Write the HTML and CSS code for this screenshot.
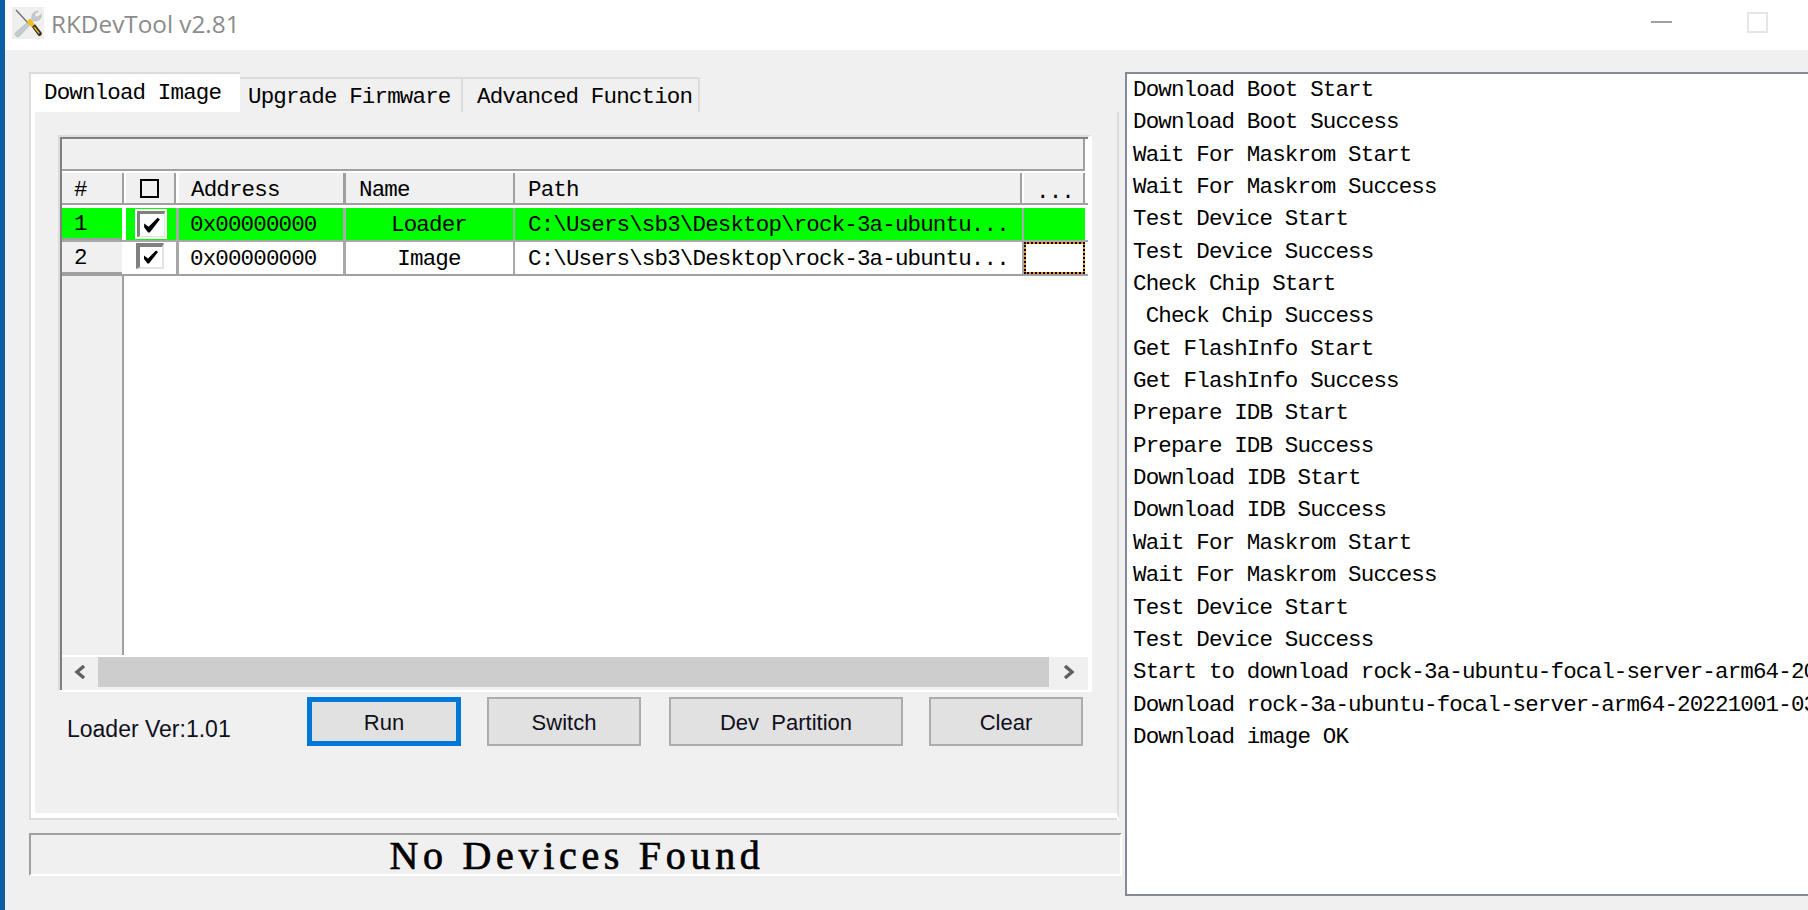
FILE: index.html
```html
<!DOCTYPE html>
<html lang="en">
<head>
<meta charset="utf-8">
<title>RKDevTool v2.81</title>
<link rel="stylesheet" href="styles.css">
</head>
<body>
<div class="window">
  <header class="titlebar">
    <svg class="app-icon" viewBox="0 0 32 32" aria-hidden="true">
      <rect width="32" height="32" fill="#efefef"/>
      <path d="M25 4.5a5.5 5.5 0 0 0-5 7.2L3.8 25.5a2.6 2.6 0 0 0 3.7 3.6l14.6-15.6a5.5 5.5 0 0 0 7.2-6.3l-3.6 3-3-1 .1-3.2 3.4-1.5a5.5 5.5 0 0 0-1.2 0z" fill="#c4ccd0" stroke="#a4acb0" stroke-width=".6"/>
      <path d="M4 3l12 13" stroke="#6d7478" stroke-width="1.4" fill="none"/>
      <path d="M14.5 14.5l3.5-3 5 6-3.2 3z" fill="#f2c01e"/>
      <path d="M20 20l3-2.8 6.5 8.3a2.3 2.3 0 0 1-3.3 3z" fill="#2c2a20"/>
      <path d="M21.5 20.5l1.2-1 5.2 6.6-1.2 1z" fill="#e6b318"/>
    </svg>
    <span class="app-title">RKDevTool v2.81</span>
    <span class="win-min"></span>
    <span class="win-max"></span>
  </header>
  <main class="body">
    <section class="left">
      <nav class="tabs">
        <div class="tab tab-active">Download Image</div>
        <div class="tab tab-second">Upgrade Firmware</div>
        <div class="tab tab-third">Advanced Function</div>
      </nav>
      <div class="panel">
        <div class="grid-outer">
          <div class="grid-inner">
            <div class="fixed-row"></div>
            <div class="row row-head">
              <div class="cell c-num">#</div>
              <div class="cell c-check"><span class="head-box"></span></div>
              <div class="cell c-addr">Address</div>
              <div class="cell c-name-head">Name</div>
              <div class="cell c-path">Path</div>
              <div class="cell c-more"><span class="more-dots">...</span></div>
            </div>
            <div class="row row-data row-green">
              <div class="cell c-num">1</div>
              <div class="cell c-check">
                <span class="check check-focus"><svg viewBox="0 0 16 14" aria-hidden="true"><path d="M1 6l4 3 8-8 2 1.500-9 11.500h-1.500L1 9.500z" fill="#000"/></svg></span>
              </div>
              <div class="cell c-addr">0x00000000</div>
              <div class="cell c-name">Loader</div>
              <div class="cell c-path">C:\Users\sb3\Desktop\rock-3a-ubuntu...</div>
              <div class="cell c-more"></div>
            </div>
            <div class="row row-data row-white">
              <div class="cell c-num">2</div>
              <div class="cell c-check">
                <span class="check"><svg viewBox="0 0 16 14" aria-hidden="true"><path d="M1 6l4 3 8-8 2 1.500-9 11.500h-1.500L1 9.500z" fill="#000"/></svg></span>
              </div>
              <div class="cell c-addr">0x00000000</div>
              <div class="cell c-name">Image</div>
              <div class="cell c-path">C:\Users\sb3\Desktop\rock-3a-ubuntu...</div>
              <div class="cell c-more c-focus"></div>
            </div>
            <div class="grid-empty"><div class="empty-num"></div></div>
            <div class="scrollbar">
              <div class="sb-arrow sb-left"><svg viewBox="0 0 14 14" aria-hidden="true"><path d="M11 1L4 7l7 6" fill="none" stroke="#606060" stroke-width="3.4"/></svg></div>
              <div class="sb-track"></div>
              <div class="sb-arrow sb-right"><svg viewBox="0 0 14 14" aria-hidden="true"><path d="M3 1l7 6-7 6" fill="none" stroke="#606060" stroke-width="3.4"/></svg></div>
            </div>
          </div>
        </div>
        <div class="actions">
          <span class="loader-ver">Loader Ver:1.01</span>
          <button class="btn btn-run">Run</button>
          <button class="btn btn-switch">Switch</button>
          <button class="btn btn-dev">Dev&nbsp; Partition</button>
          <button class="btn btn-clear">Clear</button>
        </div>
      </div>
      <div class="status">No Devices Found</div>
    </section>
    <section class="log">
      <div class="log-line">Download Boot Start</div>
      <div class="log-line">Download Boot Success</div>
      <div class="log-line">Wait For Maskrom Start</div>
      <div class="log-line">Wait For Maskrom Success</div>
      <div class="log-line">Test Device Start</div>
      <div class="log-line">Test Device Success</div>
      <div class="log-line">Check Chip Start</div>
      <div class="log-line"> Check Chip Success</div>
      <div class="log-line">Get FlashInfo Start</div>
      <div class="log-line">Get FlashInfo Success</div>
      <div class="log-line">Prepare IDB Start</div>
      <div class="log-line">Prepare IDB Success</div>
      <div class="log-line">Download IDB Start</div>
      <div class="log-line">Download IDB Success</div>
      <div class="log-line">Wait For Maskrom Start</div>
      <div class="log-line">Wait For Maskrom Success</div>
      <div class="log-line">Test Device Start</div>
      <div class="log-line">Test Device Success</div>
      <div class="log-line">Start to download rock-3a-ubuntu-focal-server-arm64-20</div>
      <div class="log-line">Download rock-3a-ubuntu-focal-server-arm64-20221001-03</div>
      <div class="log-line">Download image OK</div>
    </section>
  </main>
</div>
</body>
</html>
```
FILE: styles.css
```css
* { box-sizing: border-box; }
html, body { margin: 0; height: 100%; overflow: hidden; }
body { background: #f0f0f0; color: #000; font-family: "Liberation Mono", monospace; font-size: 22.5px; letter-spacing: -0.85px; }

.window { width: 1808px; height: 910px; border-left: 5px solid #0b5ea6; display: flex; flex-direction: column; background: #f0f0f0; }

.titlebar { height: 50px; background: #fff; display: flex; align-items: center; padding-left: 7px; flex: none; }
.app-icon { width: 32px; height: 32px; flex: none; margin-top: -4px; }
.app-title { font-family: "Open Sans", sans-serif; font-size: 24.3px; color: #8b8b8b; margin-left: 7px; margin-top: -4px; letter-spacing: 0; flex: 1; }
.win-min { width: 21px; height: 2px; background: #a0a0a0; margin-top: -6px; flex: none; }
.win-max { width: 21px; height: 21px; border: 2px solid #e6e6e6; margin-left: 75px; margin-right: 40px; margin-top: -6px; flex: none; }

.body { flex: 1; display: flex; align-items: flex-start; padding: 22px 0 0 24px; min-height: 0; }
.left { width: 1093px; flex: none; }

.tabs { display: flex; height: 40px; align-items: flex-end; }
.tab { height: 35px; background: #f0f0f0; border-top: 2px solid #dcdcdc; border-right: 2px solid #dcdcdc; white-space: pre; padding-top: 4px; line-height: 28px; }
.tab-active { height: 40px; width: 211px; background: #fff; border-left: 2px solid #dcdcdc; border-right: 0; padding-left: 13px; padding-top: 4px; line-height: 30px; }
.tab-second { width: 223px; padding-left: 8px; }
.tab-third { width: 237px; padding-left: 14px; }

.panel { width: 1090px; height: 708px; border-left: 6px solid #fff; border-bottom: 7px solid #fff; border-right: 2px solid #dcdcdc; padding: 23px 0 0 23px; position: relative; }
.panel::before { content: ""; position: absolute; left: -6px; top: 0; bottom: -7px; width: 2px; background: #dcdcdc; }
.panel::after { content: ""; position: absolute; left: -6px; right: 0; bottom: -7px; height: 2px; background: #dcdcdc; }

.grid-outer { width: 1034px; height: 557px; border-left: 2px solid #dcdcdc; border-top: 2px solid #dcdcdc; border-right: 4px solid #fff; border-bottom: 2px solid #fff; }
.grid-inner { height: 100%; border-left: 2px solid #808080; border-top: 2px solid #808080; display: flex; flex-direction: column; background: #fff; }

.fixed-row { height: 32px; flex: none; width: 1023px; background: #f0f0f0; border-right: 2px solid #a0a0a0; border-bottom: 2px solid #a0a0a0; }

.row { display: grid; grid-template-columns: 64px 53px 167px 169px 508px 65px; flex: none; }
.cell { display: flex; align-items: center; white-space: pre; overflow: hidden; }

.row-head { height: 34px; padding-top: 2px; background: #fff; border-bottom: 2px solid #a0a0a0; width: 1026px; }
.row-head .cell { height: 30px; background: #f0f0f0; line-height: 30px; padding-top: 4px; }
.row-head .c-num { border-right: 2px solid #a0a0a0; width: 62px; padding-left: 12px; }
.row-head .c-check { justify-content: center; border-right: 2px solid #a0a0a0; margin-right: 3px; width: 50px; padding: 0 2px 0 0; }
.row-head .c-addr { border-right: 3px solid #a0a0a0; padding-left: 12px; }
.row-head .c-name-head { border-right: 2px solid #a0a0a0; padding-left: 13px; }
.row-head .c-path { border-right: 2px solid #a0a0a0; padding-left: 13px; width: 507px; }
.row-head .c-more { border-right: 2px solid #a0a0a0; margin-left: 1px; width: 61px; }
.more-dots { margin-left: 12px; margin-top: 3px; }

.head-box { width: 19px; height: 19px; border: 2px solid #000; display: block; }

.row-data { border-bottom: 2px solid #a0a0a0; width: 1026px; }
.row-data .cell { height: 32px; padding-top: 2px; }
.row-green { height: 37px; padding-top: 3px; border-bottom-color: #a8a8a8; }
.row-white { height: 34px; }
.row-green .c-check, .row-green .c-addr, .row-green .c-name, .row-green .c-path, .row-green .c-more { background: #00ff00; }
.row-white .c-check, .row-white .c-addr, .row-white .c-name, .row-white .c-path, .row-white .c-more { background: #fff; }

.row-data .c-num { width: 60px; padding-left: 12px; height: 32px; }
.row-green .c-num { background: #00ff00; border-bottom: 2px solid #a0a0a0; }
.row-white .c-num { background: #f0f0f0; border-bottom: 2px solid #a0a0a0; }
.row-data .c-check { border-right: 3px solid #a8a8a8; width: 53px; padding: 0 0 0 10px; }
.row-data .c-addr { border-right: 3px solid #a8a8a8; padding-left: 11px; }
.row-data .c-name { border-right: 2px solid #a8a8a8; justify-content: center; padding-right: 1px; }
.row-data .c-path { border-right: 2px solid #a8a8a8; padding-left: 13px; width: 509px; }
.row-data .c-more { margin-left: 1px; width: 61px; padding: 0; }
.c-focus { border: 2px solid #f58a1f; outline: 2px dotted #000; outline-offset: -2px; }

.check { width: 30px; height: 28px; display: block; border-style: solid; border-width: 4px 2px 2px 4px; border-color: #808080 #e2e2e2 #e2e2e2 #808080; background: #fff; padding: 2px 3px 3px 3px; }
.check svg { width: 100%; height: 100%; display: block; }
.check-focus { outline: 2px solid #fff; outline-offset: -1px; }
.row-white .check { width: 28px; height: 26px; margin-top: -4px; }

.grid-empty { height: 381px; flex: none; }
.empty-num { width: 62px; height: 379px; background: #f0f0f0; border-right: 2px solid #a0a0a0; }

.scrollbar { height: 33px; flex: none; display: flex; background: #f0f0f0; padding-bottom: 3px; }
.sb-arrow { width: 36px; display: flex; align-items: center; justify-content: center; background: #f0f0f0; }
.sb-right { width: 39px; }
.sb-arrow svg { width: 14px; height: 14px; }
.sb-track { flex: 1; background: #cdcdcd; }

.actions { display: flex; align-items: flex-start; margin-top: 5px; padding-left: 9px; letter-spacing: 0; }
.loader-ver { width: 240px; font-family: "Liberation Sans", sans-serif; font-size: 23px; line-height: 24px; margin-top: 20px; color: #10101c; }
.btn { height: 49px; width: 154px; background: #e1e1e1; border: 2px solid #adadad; font-family: "Liberation Sans", sans-serif; font-size: 22px; color: #10101c; padding: 2px 0 0; flex: none; border-radius: 0; }
.btn-run { border: 5px solid #0078d7; }
.btn-switch { margin-left: 26px; }
.btn-dev { margin-left: 28px; width: 234px; }
.btn-clear { margin-left: 26px; }

.status { margin-top: 13px; height: 43px; width: 1093px; border-top: 2px solid #a0a0a0; border-left: 2px solid #a0a0a0; border-bottom: 2px solid #fff; border-right: 2px solid #fff; padding-left: 3px; text-align: center; font-family: "Liberation Serif", serif; font-size: 40px; font-weight: 400; letter-spacing: 4.7px; line-height: 42px; white-space: pre; color: #000; -webkit-text-stroke: .7px #000; }

.log { margin-left: 3px; width: 690px; height: 824px; flex: none; border: 2px solid #838996; border-right: 0; background: #fff; padding: 0 0 0 6px; overflow: hidden; }
.log-line { height: 32.35px; line-height: 32px; white-space: pre; }
```
